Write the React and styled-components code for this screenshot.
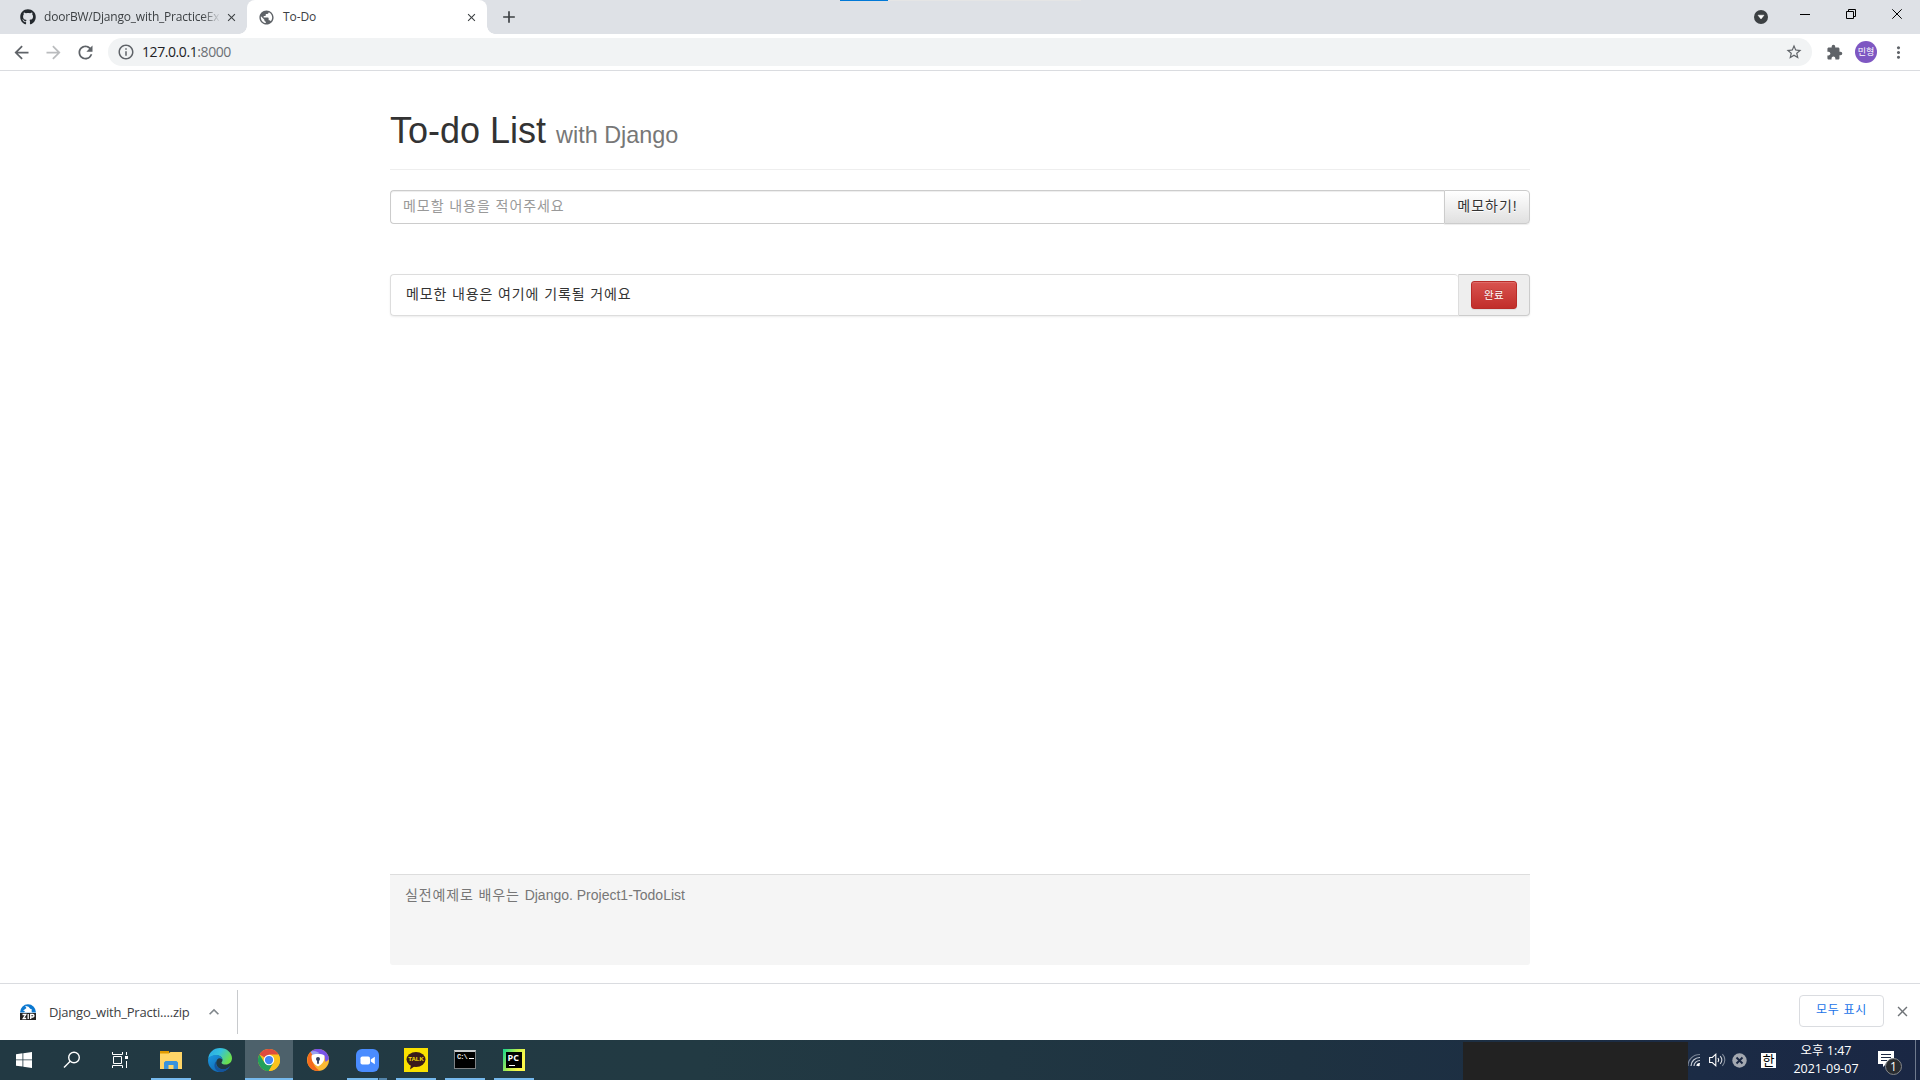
import React from "react";
import styled, { createGlobalStyle } from "styled-components";
import { FaGithub } from "react-icons/fa";
import {
  MdPublic, MdClose, MdAdd, MdArrowBack, MdArrowForward, MdRefresh,
  MdInfoOutline, MdStarBorder, MdExtension, MdMoreVert, MdExpandLess,
} from "react-icons/md";

const uiFont = `"Open Sans", "Noto Sans CJK KR", sans-serif`;
const pageFont = `"Liberation Sans", "Noto Sans CJK KR", sans-serif`;

const Global = createGlobalStyle`
  *, *::before, *::after { box-sizing: border-box; }
  html, body { margin: 0; padding: 0; background: #fff; overflow: hidden; }
  svg { display: block; flex: none; }
  button, input { font: inherit; margin: 0; }
`;

const Screen = styled.div`
  display: flex;
  flex-direction: column;
  width: 1920px;
  height: 1080px;
  background: #fff;
  font-family: ${uiFont};
`;

/* ---------- browser chrome ---------- */

const TabStrip = styled.header`
  position: relative;
  display: flex;
  height: 34px;
  background: #dee1e6;
  color: #3c4043;
`;

const LoadBar = styled.div`
  position: absolute;
  left: 840px;
  top: 0;
  width: 241px;
  height: 1px;
  background: linear-gradient(to right, #0078d7 48px, #e5e5e5 48px);
`;

const Tab = styled.div`
  position: relative;
  display: flex;
  align-items: center;
  width: ${(p) => p.$width}px;
  padding: 0 9px 0 ${(p) => p.$pad}px;
  background: ${(p) => (p.$active ? "#fff" : "transparent")};
  border-radius: ${(p) => (p.$active ? "8px 8px 0 0" : "0")};
  &::before, &::after {
    content: "";
    display: ${(p) => (p.$active ? "block" : "none")};
    position: absolute;
    bottom: 0;
    width: 8px;
    height: 8px;
  }
  &::before { left: -8px; background: radial-gradient(circle at 0 0, transparent 7.5px, #fff 8px); }
  &::after { right: -8px; background: radial-gradient(circle at 100% 0, transparent 7.5px, #fff 8px); }
`;

const TabTitle = styled.span`
  flex: 1;
  margin-left: 8px;
  white-space: nowrap;
  font-size: 12px;
  line-height: 18px;
  letter-spacing: ${(p) => p.$spacing}px;
  ${(p) => p.$fade && "mask-image: linear-gradient(to right, #000 158px, transparent 177px);"}
`;

const NewTab = styled.div`
  display: flex;
  align-items: center;
  margin-left: 12px;
`;

const WindowControls = styled.div`
  display: flex;
  margin-left: auto;
`;

const Toolbar = styled.div`
  display: flex;
  align-items: center;
  height: 37px;
  padding: 0 12px 0 11px;
  border-bottom: 1px solid #dadce0;
  color: #5f6368;
`;

const NavButtons = styled.div`
  display: flex;
  gap: 11px;
  width: 97px;
`;

const Omnibox = styled.div`
  display: flex;
  align-items: center;
  width: 1704px;
  height: 28px;
  padding: 0 9px 0 9px;
  border-radius: 14px;
  background: #f1f3f4;
`;

const Url = styled.span`
  flex: 1;
  margin-left: 7px;
  font-size: 14px;
  line-height: 20px;
  letter-spacing: -0.42px;
  color: #202124;
  span { color: #6c7075; }
`;

const ToolbarActions = styled.div`
  display: flex;
  align-items: center;
  gap: 12px;
  margin-left: 14px;
`;

const Avatar = styled.div`
  display: grid;
  place-items: center;
  width: 22px;
  height: 22px;
  border-radius: 50%;
  background: #7e57c2;
  color: #fff;
  font-size: 9px;
  line-height: 12px;
`;

/* ---------- page ---------- */

const Page = styled.main`
  display: flex;
  flex-direction: column;
  flex: 1;
  width: 1140px;
  margin: 0 auto;
  padding: 40px 0 18px;
  font-family: ${pageFont};
  font-size: 14px;
  line-height: 20px;
  color: #333;
`;

const PageHeader = styled.div`
  height: 59px;
  border-bottom: 1px solid #eee;
`;

const Title = styled.h1`
  margin: 0;
  font-size: 36px;
  font-weight: 400;
  line-height: 40px;
  small { font-size: 23.4px; color: #777; }
`;

const Korean = styled.span`
  letter-spacing: 0.88px;
`;

const MemoForm = styled.form`
  display: flex;
  height: 34px;
  margin-top: 20px;
`;

const MemoInput = styled.input`
  flex: 1;
  padding: 5px 12px 7px 12px;
  border: 1px solid #ccc;
  border-right: 0;
  border-radius: 4px 0 0 4px;
  box-shadow: inset 0 1px 1px rgba(0, 0, 0, 0.075);
  letter-spacing: 0.94px;
  outline: 0;
  &::placeholder { color: #999; opacity: 1; }
`;

const MemoButton = styled.button`
  width: 86px;
  padding: 0 0 3px 1px;
  border: 1px solid #ccc;
  border-radius: 0 4px 4px 0;
  background: linear-gradient(#fff, #e0e0e0);
  box-shadow: inset 0 1px 0 rgba(255, 255, 255, 0.15), 0 1px 1px rgba(0, 0, 0, 0.075);
  color: #333;
  letter-spacing: 0.98px;
  text-shadow: 0 1px 0 #fff;
  white-space: nowrap;
`;

const MemoItem = styled.div`
  display: flex;
  height: 42px;
  margin-top: 50px;
  border-radius: 4px;
  box-shadow: 0 1px 2px rgba(0, 0, 0, 0.075);
`;

const MemoText = styled.div`
  flex: 1;
  padding: 9px 15px 0 15px;
  border: 1px solid #ddd;
  border-right: 0;
  border-radius: 4px 4px 0 4px;
`;

const MemoAddon = styled.div`
  display: flex;
  align-items: center;
  justify-content: center;
  width: 72px;
  border: 1px solid #ccc;
  border-left-color: #ddd;
  border-radius: 0 4px 4px 0;
  background: #eee;
`;

const DoneButton = styled.button`
  width: 46px;
  height: 28px;
  padding: 0 0 1px;
  border: 1px solid #b92c28;
  border-radius: 3px;
  background: linear-gradient(#d9534f, #c12e2a);
  box-shadow: inset 0 1px 0 rgba(255, 255, 255, 0.15), 0 1px 1px rgba(0, 0, 0, 0.075);
  color: #fff;
  font-size: 10.5px;
  line-height: 16px;
  letter-spacing: 0.3px;
  text-shadow: 0 -1px 0 rgba(0, 0, 0, 0.2);
`;

const PageFooter = styled.footer`
  height: 91px;
  margin-top: auto;
  padding: 10px 15px;
  border-top: 1px solid #ddd;
  border-radius: 0 0 3px 3px;
  background: #f5f5f5;
  color: #777;
`;

/* ---------- download shelf ---------- */

const Shelf = styled.div`
  display: flex;
  align-items: center;
  height: 57px;
  padding: 0 9px 0 20px;
  border-top: 1px solid #dadce0;
  color: #3c4043;
`;

const Download = styled.div`
  display: flex;
  align-items: center;
  width: 218px;
  height: 44px;
  border-right: 1px solid #c8cacd;
`;

const FileName = styled.span`
  width: 155px;
  margin-left: 13px;
  font-size: 13px;
  line-height: 18px;
  letter-spacing: ${(p) => p.$spacing}px;
  white-space: nowrap;
`;

const ShowAll = styled.button`
  width: 85px;
  height: 32px;
  margin: 0 10px 2px auto;
  padding: 0 0 2px;
  border: 1px solid #dadce0;
  border-radius: 4px;
  background: #fff;
  color: #1a73e8;
  font-size: 12px;
  line-height: 18px;
  letter-spacing: 0.75px;
`;

const ShelfClose = styled.div`
  padding-bottom: 2px;
`;

/* ---------- taskbar ---------- */

const TaskbarRow = styled.nav`
  display: flex;
  height: 40px;
  background: linear-gradient(to right, #223943 0, #223a43 700px, #1e3241 1300px, #1b2b45 1700px, #1a2744 1920px);
  color: #fff;
`;

const SystemGroup = styled.div`
  display: flex;
  width: 147px;
`;

const Slot = styled.div`
  position: relative;
  display: grid;
  place-items: center;
  width: ${(p) => p.$width || 49}px;
  height: 40px;
  padding-right: ${(p) => (p.$width ? 0 : 1)}px;
  background: ${(p) => (p.$current ? "linear-gradient(to right, #4d616b 48px, transparent 48px)" : "transparent")};
`;

const Underline = styled.span`
  position: absolute;
  bottom: 0;
  left: ${(p) => (p.$kind === "full" ? 0 : 4)}px;
  width: ${(p) => (p.$kind === "full" ? 48 : 40)}px;
  height: 2px;
  background: ${(p) =>
    p.$kind === "stack"
      ? "linear-gradient(to right, #76b9ed 31px, #2b4654 31px, #2b4654 32px, #5485ab 32px)"
      : "#76b9ed"};
`;

const HiddenPanel = styled.div`
  width: 225px;
  height: 38px;
  margin: 2px 0 0 auto;
  background: #222;
`;

const Tray = styled.div`
  display: flex;
  align-items: center;
  width: 232px;
`;

const TrayIcon = styled.div`
  margin-right: ${(p) => p.$gap}px;
`;

const ImeBadge = styled.div`
  display: grid;
  place-items: center;
  width: 15px;
  height: 15px;
  background: #fff;
  color: #000;
  font-size: 13px;
  line-height: 14px;
`;

const Clock = styled.div`
  width: 80px;
  margin-left: 10px;
  font-size: 12.5px;
  line-height: 18px;
  text-align: center;
  letter-spacing: 0;
`;

const Notice = styled.div`
  position: relative;
  width: 24px;
  height: 24px;
  margin: 6px 0 0 12px;
`;

const NoticeCount = styled.span`
  position: absolute;
  left: 7px;
  top: 7px;
  display: grid;
  place-items: center;
  width: 17px;
  height: 17px;
  border: 1px solid #85888c;
  border-radius: 50%;
  background: #292c30;
  font-size: 12px;
  line-height: 14px;
`;

const PeekEdge = styled.div`
  align-self: stretch;
  width: 5px;
  margin-left: auto;
  border-left: 1px solid #6f7a8d;
`;

const CaptionIcons = () => (
  <svg width="170" height="34" viewBox="0 0 170 34" fill="none">
    <circle cx="11" cy="17" r="7" fill="#3c4043" />
    <path d="M8 15.2h6l-3 3.8z" fill="#fff" stroke="#fff" strokeWidth=".5" />
    <path d="M50 14.5h10" stroke="#000" />
    <path d="M96.500 11.500h7v7h-7zM98.500 11.500v-2h7v7h-2" stroke="#000" />
    <path d="M142.300 9.300l9.400 9.400M151.700 9.300l-9.400 9.400" stroke="#000" />
  </svg>
);

const ZipIcon = () => (
  <svg width="16" height="16" viewBox="0 0 16 16">
    <path d="M0 8.500a8 8.300 0 0 1 16 0z" fill="#0b78d0" />
    <path d="M5 1.800l3.500 1 1.700 2 1.800.7-.5 1.500.5 1.500H4l1-1.500-2-.2L6.500 4z" fill="#fff" />
    <path d="M0 9h16v7H0z" fill="#222" />
    <path d="M2.500 10.500h3.300l-2.600 4h3M8.200 10v5M10.700 15v-4.500h2a1.200 1.200 0 0 1 0 2.500h-2" fill="none" stroke="#fff" strokeWidth="1.300" />
  </svg>
);

const WindowsIcon = () => (
  <svg width="16" height="16" viewBox="0 0 16 16" fill="#fff">
    <path d="M0 2.200L6.500 1.300v6.200H0zM7.300 1.200L16 0v7.500H7.300zM0 8.300h6.500v6.300L0 13.700zM7.300 8.300H16V16l-8.700-1.200z" />
  </svg>
);

const SearchIcon = () => (
  <svg width="18" height="18" viewBox="0 0 18 18" fill="none" stroke="#fff" strokeWidth="1.400">
    <circle cx="11" cy="6.500" r="5.300" />
    <path d="M7.200 10.300L1 16.500" />
  </svg>
);

const TaskViewIcon = () => (
  <svg width="16" height="16" viewBox="0 0 16 16" fill="none" stroke="#fff">
    <path d="M.5 0v2.500h10V0M.5 16v-2.500h10V16M1.500 4.500h8v7h-8zM14.500 0v3M14.500 9v7" />
    <path d="M13 4h3v3h-3z" fill="#fff" stroke="none" />
  </svg>
);

const ExplorerIcon = () => (
  <svg width="22" height="20" viewBox="0 0 22 20">
    <path d="M0 3h9l1.500-1H22v17H0z" fill="#ffd567" />
    <path d="M0 1h9v2.500H0z" fill="#e19a00" />
    <path d="M4 19v-6.500l1.500-1.500h11l1.500 1.500V19h-4.500v-4h-5v4z" fill="#3a93dc" />
  </svg>
);

const EdgeIcon = () => (
  <svg width="24" height="24" viewBox="0 0 24 24">
    <defs>
      <linearGradient id="edgeTop" x1="0" y1="0" x2="1" y2=".5">
        <stop offset="0" stopColor="#27a5e8" />
        <stop offset=".5" stopColor="#35c1dd" />
        <stop offset="1" stopColor="#6be04d" />
      </linearGradient>
      <linearGradient id="edgeLow" x1="0" y1="0" x2="1" y2="1">
        <stop offset="0" stopColor="#1b98e0" />
        <stop offset="1" stopColor="#0c59a4" />
      </linearGradient>
    </defs>
    <path d="M.2 11C.6 4.700 5.500 0 12 0c7 0 12 5 12 10.200 0 3.800-2.800 6.300-6.300 6.300-2.500 0-4.200-.9-4.200-1.800 0-.6 1-1 1-2.700C14.500 9.500 12 7.500 8.500 7.500 4.500 7.500 1.500 9 .2 11z" fill="url(#edgeTop)" />
    <path d="M.1 11.500C.9 8.700 4.300 7 8 7c4 0 6.500 2.300 6.500 5-.4-1-1.500-1.700-2.700-1.700-2 0-3.600 1.900-3.600 4.500 0 4.200 4 7 8 6.500 2-.2 4-1.300 5.800-3.300C20 21.800 16.300 24 12 24 5 24-.6 18.300.1 11.500z" fill="url(#edgeLow)" />
    <path d="M8.300 13c-1.500 5 2.500 9 8 8.300 2.200-.3 4.200-1.500 5.700-3.300-2 4-6 6-10 6-5-1-7.500-7-3.700-11z" fill="#15549b" />
  </svg>
);

const ChromeIcon = () => (
  <svg width="22" height="22" viewBox="0 0 24 24">
    <circle cx="12" cy="12" r="12" fill="#fbc31c" />
    <path d="M12 12L1.600 6A12 12 0 0 1 22.400 6z" fill="#de4b3e" />
    <path d="M22.400 6H12l-5 3z" fill="#de4b3e" />
    <path d="M1.600 6l5.600 9L12 24A12 12 0 0 1 1.600 6z" fill="#22a05a" />
    <path d="M6.500 14.500L12 12l5 3-5.200 9A12 12 0 0 1 3 19z" fill="#22a05a" />
    <path d="M17 15L12 6h10.400A12 12 0 0 1 11.800 24z" fill="#fbc31c" />
    <circle cx="12" cy="12" r="5.700" fill="#fff" />
    <circle cx="12" cy="12" r="4.500" fill="#4285f4" />
  </svg>
);

const ShieldBrowserIcon = () => (
  <svg width="22" height="22" viewBox="0 0 24 24">
    <circle cx="12" cy="12" r="12" fill="#f9b934" />
    <path d="M4 3A12 12 0 0 1 24 11c-1.500 2-3 3-4 3l-1-6.500L8 6z" fill="#7853e8" />
    <path d="M4 3c3-1.500 7-1 10 2L5 7z" fill="#9aa2f0" />
    <path d="M4 3.200C-1.500 8-1 19 7 22.900c3 1.200 5 1.200 7 .5C9 21 5 15 5.500 6z" fill="#f56a1c" />
    <path d="M12 5.500c3 0 5.500.5 7 1.700.5 5.800-2 9.300-7 11.800-5-2.500-7.500-6-7-11.800 1.500-1.200 4-1.700 7-1.700z" fill="#fff" />
    <circle cx="12" cy="10.800" r="2.200" fill="#303c60" />
    <path d="M11 11h2v5h-2z" fill="#303c60" />
  </svg>
);

const ZoomIcon = () => (
  <svg width="23" height="23" viewBox="0 0 23 23">
    <rect width="23" height="23" rx="6" fill="#4a8cff" />
    <rect x="4.500" y="7.500" width="9.500" height="8" rx="1.800" fill="#fff" />
    <path d="M14.800 10.500l4-2.800v7.600l-4-2.800z" fill="#fff" />
  </svg>
);

const TalkTile = styled.div`
  position: relative;
  display: grid;
  place-items: center;
  width: 24px;
  height: 24px;
  background: #fae100;
`;

const TalkLabel = styled.span`
  position: absolute;
  top: 7px;
  left: 0;
  width: 24px;
  color: #fae100;
  font: 700 6px/8px "Liberation Sans", sans-serif;
  text-align: center;
`;

const TalkIcon = () => (
  <TalkTile>
    <svg width="20" height="19" viewBox="0 0 20 19" fill="#391b1b">
      <ellipse cx="10" cy="8.500" rx="9.500" ry="7.500" />
      <path d="M5 14l-1 4.500 5-3.500z" />
    </svg>
    <TalkLabel>TALK</TalkLabel>
  </TalkTile>
);

const ConsoleTile = styled.div`
  width: 22px;
  height: 19px;
  margin-top: -1px;
  padding: 1px 0 0 2px;
  border: 1px solid #7d8285;
  border-top: 2px solid #c9ccce;
  background: #000;
  color: #eee;
  font: 700 7px/8px "Liberation Mono", monospace;
  letter-spacing: -0.9px;
  white-space: nowrap;
  &::after {
    content: "";
    display: inline-block;
    width: 5px;
    height: 1px;
    margin-left: 2px;
    background: #fff;
  }
`;

const PyTile = styled.div`
  width: 22px;
  height: 22px;
  padding: 3px;
  background: linear-gradient(115deg, #21d789 5%, #b8ee50 45%, #fcf84a 75%);
`;

const PyFace = styled.div`
  height: 16px;
  padding: 1px 0 0 1.5px;
  background: #000;
  font: 700 9px/9px "Open Sans", sans-serif;
  &::after {
    content: "";
    display: block;
    width: 6px;
    height: 1px;
    margin: 3px 0 0 1px;
    background: #fff;
  }
`;

const WifiIcon = () => (
  <svg width="12" height="14" viewBox="0 0 12 14" fill="none" stroke="#c8ced8" strokeWidth="1.200">
    <path d="M0 13C0 6.500 5 1.500 12 1.500" opacity=".55" />
    <path d="M3 13c0-4.800 4-8.500 9-8.500M6 13c0-3 2.700-5.500 6-5.500" />
    <path d="M9 13c0-1.300 1.300-2.500 3-2.500" stroke="#fff" />
    <circle cx="10.500" cy="12" r="1.300" fill="#fff" stroke="none" />
  </svg>
);

const SpeakerIcon = () => (
  <svg width="17" height="16" viewBox="0 0 17 16" fill="none" stroke="#fff" strokeWidth="1.100">
    <path d="M.6 5.500h2.700l3.500-3.300v11.600l-3.500-3.300H.6z" />
    <path d="M9 6c.9 1.200.9 2.800 0 4" />
    <path d="M11.200 4.200c1.900 2.200 1.900 5.400 0 7.600" opacity=".8" />
    <path d="M13.400 2.200c3.200 3.300 3.200 8.300 0 11.600" opacity=".45" />
  </svg>
);

const SyncStoppedIcon = () => (
  <svg width="15" height="15" viewBox="0 0 15 15">
    <circle cx="7.500" cy="7.500" r="7.200" fill="#a3a8b0" />
    <path d="M4.500 4.500l6 6M10.500 4.500l-6 6" stroke="#1b2843" strokeWidth="1.900" />
  </svg>
);

const NoticeIcon = () => (
  <svg width="17" height="16" viewBox="0 0 17 16">
    <path d="M0 0h16v13H8l-3 3v-3H0z" fill="#fff" />
    <path d="M3 3.500h10M3 6.500h10M3 9.500h6" stroke="#1b2843" />
  </svg>
);

const apps = [
  { Icon: ExplorerIcon, kind: "single" },
  { Icon: EdgeIcon },
  { Icon: ChromeIcon, kind: "full", current: true },
  { Icon: ShieldBrowserIcon },
  { Icon: ZoomIcon, kind: "stack" },
  { Icon: TalkIcon, kind: "single" },
  { Icon: () => <ConsoleTile>C:\</ConsoleTile>, kind: "single" },
  { Icon: () => <PyTile><PyFace>PC</PyFace></PyTile>, kind: "single" },
];

export default function App() {
  return (
    <Screen>
      <Global />
      <TabStrip>
        <LoadBar />
        <Tab $width={247} $pad={20}>
          <FaGithub size={16} color="#24292e" />
          <TabTitle $fade $spacing={-0.2}>doorBW/Django_with_PracticeEx</TabTitle>
          <MdClose size={13} />
        </Tab>
        <Tab $active $width={240} $pad={11}>
          <MdPublic size={17} color="#5f6368" />
          <TabTitle $spacing={-0.1}>To-Do</TabTitle>
          <MdClose size={13} />
        </Tab>
        <NewTab><MdAdd size={20} /></NewTab>
        <WindowControls><CaptionIcons /></WindowControls>
      </TabStrip>

      <Toolbar>
        <NavButtons>
          <MdArrowBack size={21} />
          <MdArrowForward size={21} color="#babcbe" />
          <MdRefresh size={21} />
        </NavButtons>
        <Omnibox>
          <MdInfoOutline size={18} />
          <Url>127.0.0.1<span>:8000</span></Url>
          <MdStarBorder size={18} />
        </Omnibox>
        <ToolbarActions>
          <MdExtension size={17} />
          <Avatar>민형</Avatar>
          <MdMoreVert size={19} />
        </ToolbarActions>
      </Toolbar>

      <Page>
        <PageHeader>
          <Title>To-do List <small>with Django</small></Title>
        </PageHeader>
        <MemoForm>
          <MemoInput placeholder="메모할 내용을 적어주세요" />
          <MemoButton type="button">메모하기!</MemoButton>
        </MemoForm>
        <MemoItem>
          <MemoText><Korean>메모한 내용은 여기에 기록될 거에요</Korean></MemoText>
          <MemoAddon><DoneButton>완료</DoneButton></MemoAddon>
        </MemoItem>
        <PageFooter><Korean>실전예제로 배우는 </Korean>Django. Project1-TodoList</PageFooter>
      </Page>

      <Shelf>
        <Download>
          <ZipIcon />
          <FileName $spacing={-0.2}>Django_with_Practi....zip</FileName>
          <MdExpandLess size={20} color="#80868b" />
        </Download>
        <ShowAll>모두 표시</ShowAll>
        <ShelfClose><MdClose size={17} color="#6f7377" /></ShelfClose>
      </Shelf>

      <TaskbarRow>
        <SystemGroup>
          <Slot $width={48}><WindowsIcon /></Slot>
          <Slot $width={48}><SearchIcon /></Slot>
          <Slot $width={48}><TaskViewIcon /></Slot>
        </SystemGroup>
        {apps.map(({ Icon, kind, current }, i) => (
          <Slot key={i} $current={current}>
            <Icon />
            {kind && <Underline $kind={kind} />}
          </Slot>
        ))}
        <HiddenPanel />
        <Tray>
          <TrayIcon $gap={9}><WifiIcon /></TrayIcon>
          <TrayIcon $gap={6}><SpeakerIcon /></TrayIcon>
          <TrayIcon $gap={14}><SyncStoppedIcon /></TrayIcon>
          <ImeBadge>한</ImeBadge>
          <Clock>오후 1:47<br />2021-09-07</Clock>
          <Notice>
            <NoticeIcon />
            <NoticeCount>1</NoticeCount>
          </Notice>
          <PeekEdge />
        </Tray>
      </TaskbarRow>
    </Screen>
  );
}
